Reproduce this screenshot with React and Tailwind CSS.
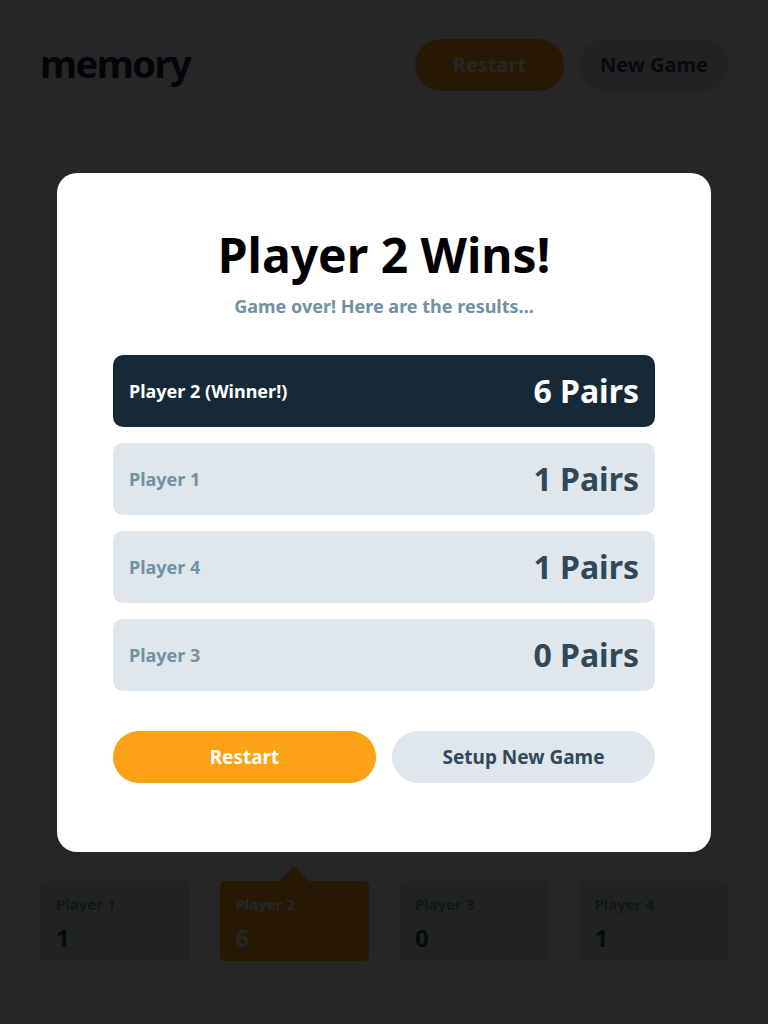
const players = [
  { name: 'Player 1', score: 1 },
  { name: 'Player 2', score: 6, active: true },
  { name: 'Player 3', score: 0 },
  { name: 'Player 4', score: 1 },
];

const results = [
  { name: 'Player 2 (Winner!)', pairs: 6, winner: true },
  { name: 'Player 1', pairs: 1 },
  { name: 'Player 4', pairs: 1 },
  { name: 'Player 3', pairs: 0 },
];

const font = { fontFamily: '"Noto Sans", "Liberation Sans", sans-serif' };

function ResultRow({ row }) {
  return (
    <div
      className={
        'flex items-center justify-between h-[72px] px-4 rounded-[10px] ' +
        (row.winner ? 'bg-[#152938]' : 'bg-[#DFE7EC]')
      }
    >
      <span className={'text-[18px] font-bold ' + (row.winner ? 'text-white' : 'text-[#7191A5]')}>
        {row.name}
      </span>
      <span className={'text-[32px] font-bold ' + (row.winner ? 'text-white' : 'text-[#304859]')}>
        {row.pairs} Pairs
      </span>
    </div>
  );
}

export default function App() {
  return (
    <div className="relative w-[768px] h-[1024px] bg-[#FCFCFC] overflow-hidden" style={font}>
      {/* game behind the modal */}
      <header className="flex items-center justify-between px-10 pt-[39px]">
        <h1 className="text-[38px] font-bold text-[#152938] leading-none tracking-[-1.5px] -mt-1">memory</h1>
        <div className="flex gap-4">
          <button className="w-[149px] h-[52px] rounded-full bg-[#FDA214] text-white text-[20px] font-bold">
            Restart
          </button>
          <button className="w-[148px] h-[52px] rounded-full bg-[#DFE7EC] text-[#304859] text-[20px] font-bold">
            New Game
          </button>
        </div>
      </header>

      <div className="grid grid-cols-4 gap-[30px] px-10 mt-[790px]">
        {players.map(p => (
          <div
            key={p.name}
            className={
              'relative h-[80px] rounded-[5px] px-4 pt-3 ' +
              (p.active ? 'bg-[#FDA214]' : 'bg-[#DFE7EC]')
            }
          >
            {p.active && (
              <div className="absolute left-1/2 -translate-x-1/2 -top-[15px] w-0 h-0 border-l-[15px] border-r-[15px] border-b-[15px] border-l-transparent border-r-transparent border-b-[#FDA214]" />
            )}
            <div className={'text-[15px] font-bold ' + (p.active ? 'text-white' : 'text-[#7191A5]')}>
              {p.name}
            </div>
            <div className={'text-[24px] font-bold mt-1 ' + (p.active ? 'text-white' : 'text-[#304859]')}>
              {p.score}
            </div>
          </div>
        ))}
      </div>

      {/* overlay */}
      <div className="absolute inset-0 bg-black/85 flex justify-center pt-[173px]">
        <div className="w-[654px] h-[679px] bg-white rounded-[20px] px-14 pt-[52px] flex flex-col">
          <h2 className="text-[48px] font-bold text-black text-center leading-tight">Player 2 Wins!</h2>
          <p className="text-[18px] font-bold text-[#7191A5] text-center mt-2">
            Game over! Here are the results...
          </p>
          <div className="flex flex-col gap-4 mt-[35px]">
            {results.map(r => (
              <ResultRow key={r.name} row={r} />
            ))}
          </div>
          <div className="grid grid-cols-2 gap-4 mt-10">
            <button className="h-[52px] rounded-full bg-[#FDA214] text-white text-[19px] font-bold">
              Restart
            </button>
            <button className="h-[52px] rounded-full bg-[#DFE7EC] text-[#304859] text-[19px] font-bold">
              Setup New Game
            </button>
          </div>
        </div>
      </div>
    </div>
  );
}
